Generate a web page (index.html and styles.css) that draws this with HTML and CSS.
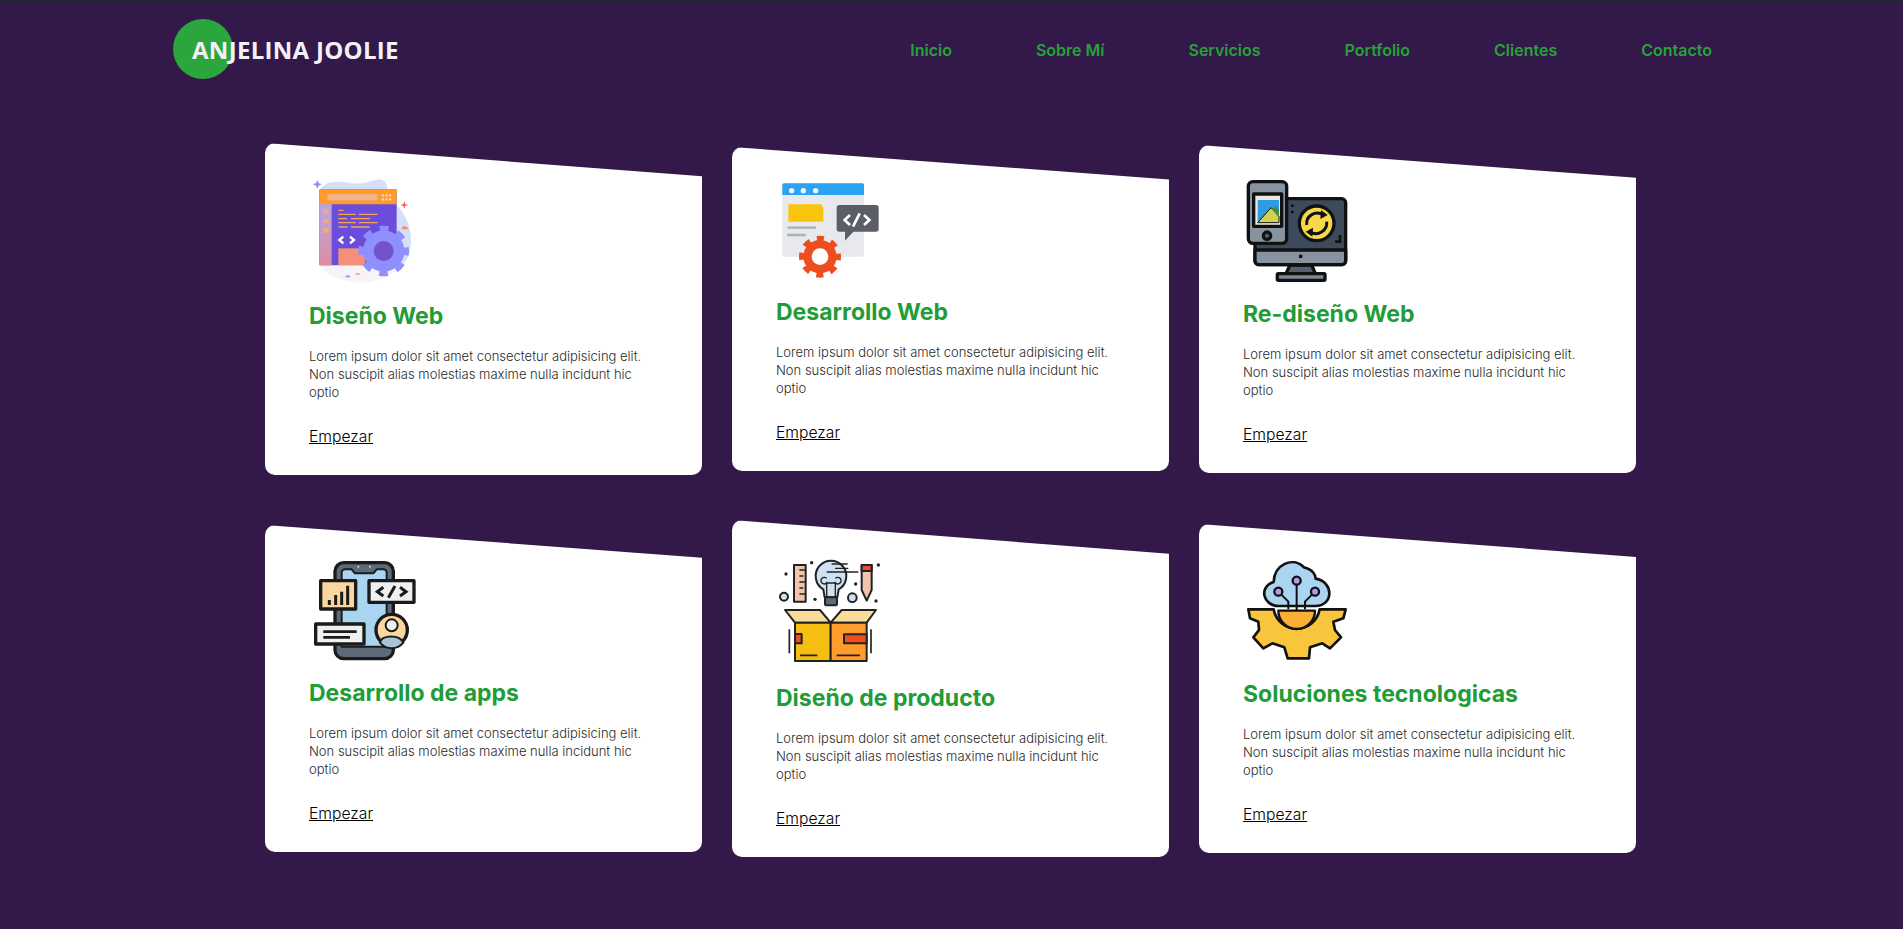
FILE: index.html
```html
<!DOCTYPE html>
<html lang="es">
<head>
<meta charset="utf-8">
<title>Anjelina Joolie</title>
<link rel="stylesheet" href="styles.css">
</head>
<body>
<header class="top">
  <a class="logo" href="#"><span class="logo-text">ANJELINA JOOLIE</span></a>
  <nav class="nav">
    <a href="#">Inicio</a><a href="#">Sobre Mí</a><a href="#">Servicios</a><a href="#">Portfolio</a><a href="#">Clientes</a><a href="#">Contacto</a>
  </nav>
</header>
<main class="grid">
  <article class="card">
    <svg class="icon h1" viewBox="42 9 360 360">
      <defs>
        <linearGradient id="side" x1="0" y1="0" x2="0" y2="1"><stop offset="0" stop-color="#b3a6ea"/><stop offset="1" stop-color="#dc8f9f"/></linearGradient>
      </defs>
      <path d="M75 90C90 62 130 62 170 70C215 78 250 45 270 65C285 85 270 110 300 130C340 170 355 220 345 270C335 330 280 350 230 365C170 375 100 350 75 320Z" fill="#f5f5f9"/>
      <path d="M75 90C90 62 130 62 170 70C215 78 250 45 270 65C285 85 270 110 300 130C340 170 355 220 345 270C340 300 320 320 300 330L200 120L75 120Z" fill="#d5dff8"/>
      <rect x="73" y="88" width="232" height="228" rx="4" fill="#6b4ddb"/>
      <rect x="73" y="130" width="37" height="186" fill="url(#side)"/>
      <rect x="73" y="88" width="232" height="45" rx="3" fill="#ff9a2b"/>
      <rect x="97" y="103" width="150" height="18" fill="#ecb78f"/>
      <path d="M260 106h30M260 118h30" stroke="#f6d9b8" stroke-width="7" stroke-dasharray="7 4"/>
      <path d="M85 155h16M85 183h16M85 211h16" stroke="#f2ab7e" stroke-width="14"/>
      <path d="M130 151h15M130 163h52M192 163h56M130 176h26M168 176h57M130 188h52M192 188h56M130 201h28M168 201h56" stroke="#f6a45c" stroke-width="4"/>
      <path d="M145 230l-12 10 12 10M165 230l12 10-12 10" fill="none" stroke="#fff" stroke-width="7"/>
      <rect x="130" y="265" width="80" height="50" fill="#f48f7c"/>
      <circle cx="266" cy="273" r="62" fill="#8f8fff"/>
      <circle cx="266" cy="273" r="66" fill="none" stroke="#8f8fff" stroke-width="20" pathLength="16" stroke-dasharray="1 1" stroke-dashoffset=".5"/>
      <circle cx="266" cy="273" r="30" fill="#7453c9"/>
      <path d="M67 60l4 9 9 4-9 4-4 9-4-9-9-4 9-4Z" fill="#8f8fff"/>
      <path d="M328 123l3 9 9 3-9 3-3 9-3-9-9-3 9-3Z" fill="#f4694e"/>
      <path d="M320 208a9 9 0 0 1 18 0Z" fill="#f58b6c"/>
      <path d="M150 352a9 9 0 0 1 17 0Z" fill="#8f8fff"/>
      <path d="M180 344a9 9 0 0 1 17 0Z" fill="#f6b06e"/>
    </svg>
    <h3>Diseño Web</h3>
    <p>Lorem ipsum dolor sit amet consectetur adipisicing elit. Non suscipit alias molestias maxime nulla incidunt hic optio</p>
    <a class="more" href="#">Empezar</a>
  </article>

  <article class="card">
    <svg class="icon h2" viewBox="18 -9 360 336">
      <rect x="37" y="40" width="245" height="220" rx="5" fill="#e8e9ed"/>
      <path d="M37 75V45a5 5 0 0 1 5-5h235a5 5 0 0 1 5 5v30Z" fill="#2ba3f5"/>
      <g fill="#f4f6fa"><circle cx="65" cy="62" r="8"/><circle cx="100" cy="62" r="8"/><circle cx="137" cy="62" r="8"/></g>
      <path d="M55 103h98l7 10v42H55Z" fill="#f9c40e"/>
      <path d="M52 173h86M52 195h55" stroke="#a9b0bb" stroke-width="7"/>
      <path d="M208 105h110a8 8 0 0 1 8 8v64a8 8 0 0 1-8 8h-68l-25 27v-27h-17a8 8 0 0 1-8-8v-64a8 8 0 0 1 8-8Z" fill="#5b5e66"/>
      <path d="M240 135l-16 15 16 15M282 135l16 15-16 15M269 130l-20 40" fill="none" stroke="#fff" stroke-width="8"/>
      <circle cx="150" cy="260" r="50" fill="#ee4e1f"/>
      <circle cx="150" cy="260" r="54" fill="none" stroke="#ee4e1f" stroke-width="18" pathLength="16" stroke-dasharray="1 1" stroke-dashoffset=".5"/>
      <circle cx="150" cy="260" r="25" fill="#fff"/>
    </svg>
    <h3>Desarrollo Web</h3>
    <p>Lorem ipsum dolor sit amet consectetur adipisicing elit. Non suscipit alias molestias maxime nulla incidunt hic optio</p>
    <a class="more" href="#">Empezar</a>
  </article>

  <article class="card">
    <svg class="icon h3" viewBox="24 -15 360 348">
      <g stroke="#111" stroke-width="10" stroke-linejoin="round">
        <path d="M165 285h65l12 28h-90Z" fill="#56616f"/>
        <rect x="127" y="311" width="143" height="20" rx="3" fill="#7d8a96"/>
        <rect x="60" y="86" width="272" height="198" rx="12" fill="#3c4a5c"/>
        <path d="M60 240h272v32a12 12 0 0 1-12 12H72a12 12 0 0 1-12-12Z" fill="#8794a0"/>
        <circle cx="245" cy="160" r="52" fill="#f7d84a"/>
        <rect x="40" y="35" width="115" height="185" rx="14" fill="#8794a0"/>
        <rect x="56" y="72" width="84" height="97" fill="#ece9e4"/>
        <circle cx="96" cy="197" r="11" fill="#56616f"/>
      </g>
      <rect x="68" y="90" width="64" height="68" fill="#2f9be0"/>
      <path d="M68 158l40-45 24 25v20Z" fill="#d6cf4e" stroke="#111" stroke-width="3"/>
      <path d="M110 118l12-8 10 10v22Z" fill="#3b8f45"/>
      <path d="M215 165a32 32 0 0 1 50-30M275 155a32 32 0 0 1-50 30" fill="none" stroke="#111" stroke-width="9"/>
      <path d="M258 120l20 15-22 12ZM232 200l-20-15 22-12Z" fill="#111"/>
      <path d="M172 103v8M172 122v8M315 195v20h-15" fill="none" stroke="#111" stroke-width="8"/>
      <rect x="192" y="254" width="10" height="10" fill="#111"/>
    </svg>
    <h3>Re-diseño Web</h3>
    <p>Lorem ipsum dolor sit amet consectetur adipisicing elit. Non suscipit alias molestias maxime nulla incidunt hic optio</p>
    <a class="more" href="#">Empezar</a>
  </article>

  <article class="card">
    <svg class="icon h4" viewBox="27 -15 360 345">
      <g stroke="#1b1b1b" stroke-width="10" stroke-linejoin="round">
        <rect x="105" y="38" width="175" height="288" rx="26" fill="#5c6a7a"/>
        <path d="M125 68a10 10 0 0 1 10-10h20l10 12h55l10-12h20a10 10 0 0 1 10 10v222h-135Z" fill="#a9d5f1" stroke-width="6"/>
        <rect x="62" y="92" width="105" height="85" fill="#fad6a0"/>
        <rect x="207" y="92" width="135" height="65" fill="#eef0f2"/>
        <rect x="47" y="222" width="145" height="60" fill="#eef0f2"/>
        <circle cx="275" cy="240" r="47" fill="#fad6a0"/>
      </g>
      <path d="M88 165v-15M107 165v-30M125 165v-40M143 165v-58" stroke="#1b1b1b" stroke-width="9"/>
      <path d="M250 112l-18 13 18 13M300 112l18 13-18 13M285 108l-20 35" fill="none" stroke="#1b1b1b" stroke-width="9"/>
      <path d="M70 245h100M70 262h80" stroke="#1b1b1b" stroke-width="8"/>
      <path d="M240 278c5-25 60-25 70 0a45 45 0 0 1-70 0Z" fill="#a9c4d8" stroke="#1b1b1b" stroke-width="6"/>
      <circle cx="275" cy="226" r="18" fill="#eef0f2" stroke="#1b1b1b" stroke-width="6"/>
      <circle cx="175" cy="50" r="3" fill="#ddd"/><circle cx="210" cy="50" r="3" fill="#ddd"/>
    </svg>
    <h3>Desarrollo de apps</h3>
    <p>Lorem ipsum dolor sit amet consectetur adipisicing elit. Non suscipit alias molestias maxime nulla incidunt hic optio</p>
    <a class="more" href="#">Empezar</a>
  </article>

  <article class="card">
    <svg class="icon h5" viewBox="18 -30 360 375">
      <g stroke="#222" stroke-width="6" stroke-linejoin="round">
        <rect x="72" y="45" width="35" height="110" fill="#f3c4ac"/>
        <path d="M275 45h30v75l-15 32-15-32Z" fill="#f3c4ac"/>
        <rect x="275" y="45" width="30" height="18" fill="#e84e2c"/>
        <path d="M160 118a46 46 0 1 1 46 0l-4 24h-38Z" fill="#cfe0f4"/>
        <rect x="165" y="142" width="36" height="24" rx="4" fill="#5c6a7a"/>
        <circle cx="42" cy="140" r="12" fill="#cfe0f4"/>
        <circle cx="247" cy="143" r="13" fill="#cfe0f4"/>
        <path d="M45 180h105l32 38H75ZM318 180H215l-33 38h108Z" fill="#f7dc9a"/>
        <rect x="75" y="218" width="107" height="115" fill="#f6be12"/>
        <rect x="182" y="218" width="108" height="115" fill="#ff9c2b"/>
        <rect x="75" y="252" width="20" height="28" fill="#ee4e1f"/>
        <rect x="222" y="253" width="68" height="27" fill="#ee4e1f"/>
      </g>
      <path d="M170 142V95m26 47V95M170 85a10 10 0 1 0 0 14h26a10 10 0 1 0 0-14M185 42h48M195 55h40M170 66h95M88 60h18M88 78h12M88 96h18M88 114h12M88 132h18" fill="none" stroke="#222" stroke-width="4"/>
      <path d="M58 238v72M303 238v72M90 316h52M200 316h70" stroke="#222" stroke-width="5"/>
      <g fill="#222"><circle cx="125" cy="38" r="5"/><circle cx="48" cy="72" r="5"/><circle cx="325" cy="45" r="5"/><circle cx="135" cy="148" r="5"/><circle cx="257" cy="102" r="5"/><circle cx="318" cy="153" r="5"/></g>
    </svg>
    <h3>Diseño de producto</h3>
    <p>Lorem ipsum dolor sit amet consectetur adipisicing elit. Non suscipit alias molestias maxime nulla incidunt hic optio</p>
    <a class="more" href="#">Empezar</a>
  </article>

  <article class="card">
    <svg class="icon h6" viewBox="24 -18 360 351">
      <path d="M130 168C84 168 70 110 116 96C118 44 172 18 207 52C234 58 242 76 242 86C296 94 298 168 240 168Z" fill="#a9d5f1" stroke="#111" stroke-width="8" stroke-linejoin="round"/>
      <path d="M40 178H116A70 70 0 0 0 254 178H332L325 205L295 215L300 240L318 262L285 295L262 280L225 292L222 325H158L148 292L112 280L85 295L55 262L72 240L70 215L45 205Z" fill="#f9c53d" stroke="#111" stroke-width="8" stroke-linejoin="round"/>
      <path d="M130 182H240A55 55 0 0 1 130 182Z" fill="#f9b035" stroke="#111" stroke-width="7" stroke-linejoin="round"/>
      <path d="M185 100V180M130 125L160 155V178M240 125L210 155V178" fill="none" stroke="#111" stroke-width="6"/>
      <g fill="#b79af0" stroke="#111" stroke-width="7"><circle cx="185" cy="92" r="12"/><circle cx="130" cy="125" r="12"/><circle cx="240" cy="125" r="12"/></g>
    </svg>
    <h3>Soluciones tecnologicas</h3>
    <p>Lorem ipsum dolor sit amet consectetur adipisicing elit. Non suscipit alias molestias maxime nulla incidunt hic optio</p>
    <a class="more" href="#">Empezar</a>
  </article>
</main>
</body>
</html>
```

FILE: styles.css
```css
* { box-sizing: border-box; }
html, body { margin: 0; height: 100%; }
body {
  background: #32194a;
  border-top: 2px solid #222b2a;
  font-family: Inter, "Open Sans", sans-serif;
  overflow: hidden;
}
.top {
  display: flex;
  justify-content: space-between;
  align-items: center;
  height: 94px;
  padding: 0 191px 0 173px;
}
.logo {
  position: relative;
  display: flex;
  align-items: center;
  height: 60px;
  padding-left: 19px;
  text-decoration: none;
}
.logo::before {
  content: "";
  position: absolute;
  left: 0;
  top: 0;
  width: 60px;
  height: 60px;
  border-radius: 50%;
  background: #2aa63c;
}
.logo-text {
  position: relative;
  color: #f3f1f6;
  font-family: "Open Sans", sans-serif;
  font-size: 24px;
  font-weight: 700;
  letter-spacing: .3px;
  white-space: nowrap;
}
.nav { display: flex; gap: 84px; padding-top: 2px; }
.nav a {
  color: #26a238;
  font-size: 16px;
  font-weight: 600;
  text-decoration: none;
}
.grid {
  display: grid;
  grid-template-columns: repeat(3, 437px);
  column-gap: 30px;
  row-gap: 45px;
  align-items: center;
  margin: 47px 0 0 265px;
}
.card {
  background: #fff;
  border-radius: 10px;
  padding: 20px 44px 28px;
  clip-path: polygon(0 0, 100% 10%, 100% 100%, 0 100%);
}
.icon { display: block; width: 120px; overflow: visible; margin-bottom: 17px; filter: blur(.4px); }
.h1 { height: 120px; }
.h2 { height: 112px; }
.h3 { height: 116px; }
.h4 { height: 115px; }
.h5 { height: 125px; }
.h6 { height: 117px; }
.card h3 {
  margin: 0 0 14px;
  color: #219c36;
  font-size: 23px;
  font-weight: 700;
  line-height: 33px;
}
.card p {
  max-width: 340px;
  margin: 0 0 26px;
  color: #2a2a2a;
  font-size: 13px;
  font-weight: 300;
  line-height: 18px;
}
.more {
  display: block;
  color: #000;
  font-size: 15.7px;
  font-weight: 300;
  line-height: 20px;
  text-decoration: underline;
}
```
